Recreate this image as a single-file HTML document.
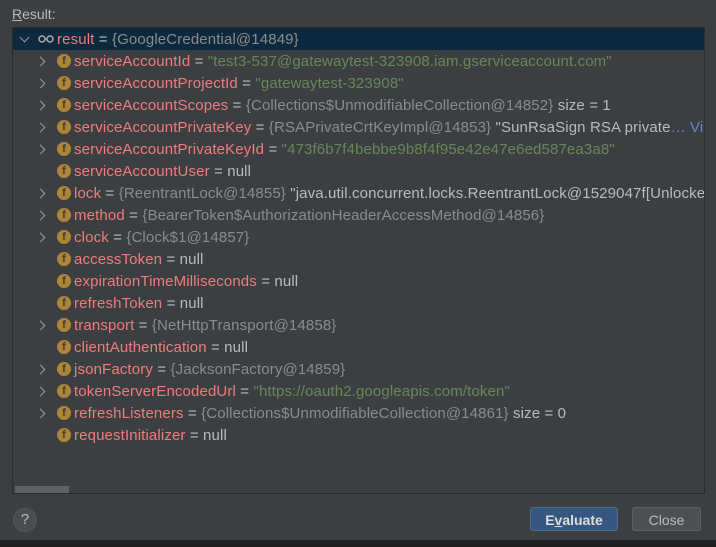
<!DOCTYPE html>
<html><head><style>
body{margin:0;width:716px;height:547px;background:#3c3f41;position:relative;overflow:hidden;font-family:"Liberation Sans",sans-serif;font-size:15px;color:#bbbbbb}
.lbl{position:absolute;left:12px;top:6px;font-size:14px;color:#bbb}
.panel{position:absolute;left:12px;top:27px;width:693px;height:467px;border:1px solid #2b2b2b;box-sizing:border-box;background:#3c3f41;overflow:hidden}
.row{position:absolute;left:0;height:22px;line-height:24px;white-space:nowrap;width:1000px;letter-spacing:0.13px}
.sel{background:#0d293e;width:692px}
.chev{position:absolute;width:6px;height:6px;border-right:1.5px solid #9a9a9a;border-bottom:1.5px solid #9a9a9a}
.r{transform:rotate(-45deg)}
.d{transform:rotate(45deg)}
.ic{position:absolute;top:4px;width:14px;height:14px;border-radius:50%;background:#b08436;color:#3c3f41;font-size:11px;line-height:14px;text-align:center;font-weight:bold;letter-spacing:0}
.t{position:absolute;left:61px}
.n{color:#f07c7c}.s{color:#6a8759}.g{color:#8c8c8c}.w{color:#bbb}.v{color:#5c8ac9}
.btn{position:absolute;top:507px;height:24px;border-radius:3px;line-height:24px;text-align:center;font-size:14px;box-sizing:border-box}
</style></head><body>
<div class="lbl"><u>R</u>esult:</div>
<div class="panel">
<div class="row sel" style="top:0">
<div class="chev d" style="left:8px;top:6px"></div>
<svg style="position:absolute;left:25px;top:5px" width="16" height="10"><circle cx="4" cy="6" r="3" fill="none" stroke="#aaa" stroke-width="1.5"/><circle cx="12" cy="6" r="3" fill="none" stroke="#aaa" stroke-width="1.5"/><line x1="7" y1="6" x2="9" y2="6" stroke="#aaa" stroke-width="1.5"/></svg>
<span style="position:absolute;left:44px"><span class="n">result</span> = <span class="g">{GoogleCredential@14849}</span></span></div>
<div class="row" style="top:22px"><div class="chev r" style="left:24px;top:8px"></div><div class="ic" style="left:44px">f</div><span class="t"><span class="n">serviceAccountId</span> = <span class="s">"test3-537@gatewaytest-323908.iam.gserviceaccount.com"</span></span></div>
<div class="row" style="top:44px"><div class="chev r" style="left:24px;top:8px"></div><div class="ic" style="left:44px">f</div><span class="t"><span class="n">serviceAccountProjectId</span> = <span class="s">"gatewaytest-323908"</span></span></div>
<div class="row" style="top:66px"><div class="chev r" style="left:24px;top:8px"></div><div class="ic" style="left:44px">f</div><span class="t"><span class="n">serviceAccountScopes</span> = <span class="g">{Collections$UnmodifiableCollection@14852}</span> <span class="w"> size = 1</span></span></div>
<div class="row" style="top:88px"><div class="chev r" style="left:24px;top:8px"></div><div class="ic" style="left:44px">f</div><span class="t"><span class="n">serviceAccountPrivateKey</span> = <span class="g">{RSAPrivateCrtKeyImpl@14853}</span> <span class="w">"SunRsaSign RSA private</span><span class="v">… View</span></span></div>
<div class="row" style="top:110px"><div class="chev r" style="left:24px;top:8px"></div><div class="ic" style="left:44px">f</div><span class="t"><span class="n">serviceAccountPrivateKeyId</span> = <span class="s">"473f6b7f4bebbe9b8f4f95e42e47e6ed587ea3a8"</span></span></div>
<div class="row" style="top:132px"><div class="ic" style="left:44px">f</div><span class="t"><span class="n">serviceAccountUser</span> = null</span></div>
<div class="row" style="top:154px"><div class="chev r" style="left:24px;top:8px"></div><div class="ic" style="left:44px">f</div><span class="t"><span class="n">lock</span> = <span class="g">{ReentrantLock@14855}</span> "java.util.concurrent.locks.ReentrantLock@1529047f[Unlocked]"</span></div>
<div class="row" style="top:176px"><div class="chev r" style="left:24px;top:8px"></div><div class="ic" style="left:44px">f</div><span class="t"><span class="n">method</span> = <span class="g">{BearerToken$AuthorizationHeaderAccessMethod@14856}</span></span></div>
<div class="row" style="top:198px"><div class="chev r" style="left:24px;top:8px"></div><div class="ic" style="left:44px">f</div><span class="t"><span class="n">clock</span> = <span class="g">{Clock$1@14857}</span></span></div>
<div class="row" style="top:220px"><div class="ic" style="left:44px">f</div><span class="t"><span class="n">accessToken</span> = null</span></div>
<div class="row" style="top:242px"><div class="ic" style="left:44px">f</div><span class="t"><span class="n">expirationTimeMilliseconds</span> = null</span></div>
<div class="row" style="top:264px"><div class="ic" style="left:44px">f</div><span class="t"><span class="n">refreshToken</span> = null</span></div>
<div class="row" style="top:286px"><div class="chev r" style="left:24px;top:8px"></div><div class="ic" style="left:44px">f</div><span class="t"><span class="n">transport</span> = <span class="g">{NetHttpTransport@14858}</span></span></div>
<div class="row" style="top:308px"><div class="ic" style="left:44px">f</div><span class="t"><span class="n">clientAuthentication</span> = null</span></div>
<div class="row" style="top:330px"><div class="chev r" style="left:24px;top:8px"></div><div class="ic" style="left:44px">f</div><span class="t"><span class="n">jsonFactory</span> = <span class="g">{JacksonFactory@14859}</span></span></div>
<div class="row" style="top:352px"><div class="chev r" style="left:24px;top:8px"></div><div class="ic" style="left:44px">f</div><span class="t"><span class="n">tokenServerEncodedUrl</span> = <span class="s">"https://oauth2.googleapis.com/token"</span></span></div>
<div class="row" style="top:374px"><div class="chev r" style="left:24px;top:8px"></div><div class="ic" style="left:44px">f</div><span class="t"><span class="n">refreshListeners</span> = <span class="g">{Collections$UnmodifiableCollection@14861}</span> <span class="w"> size = 0</span></span></div>
<div class="row" style="top:396px"><div class="ic" style="left:44px">f</div><span class="t"><span class="n">requestInitializer</span> = null</span></div>
<div style="position:absolute;left:2px;top:458px;width:54px;height:7px;background:#5f6163"></div>
</div>
<div style="position:absolute;left:13px;top:508px;width:24px;height:24px;border-radius:50%;background:#4a4d4f;border:1px solid #555;box-sizing:border-box;text-align:center;line-height:22px;color:#bbb;font-size:15px">?</div>
<div class="btn" style="left:530px;width:88px;background:#365880;border:1px solid #4c708c;color:#ddd;font-weight:bold">E<u>v</u>aluate</div>
<div class="btn" style="left:632px;width:69px;background:#4c5052;border:1px solid #5e6060;color:#bbb">Close</div>
<div style="position:absolute;left:0;top:540px;width:716px;height:7px;background:#1f1f1f"></div>
</body></html>
